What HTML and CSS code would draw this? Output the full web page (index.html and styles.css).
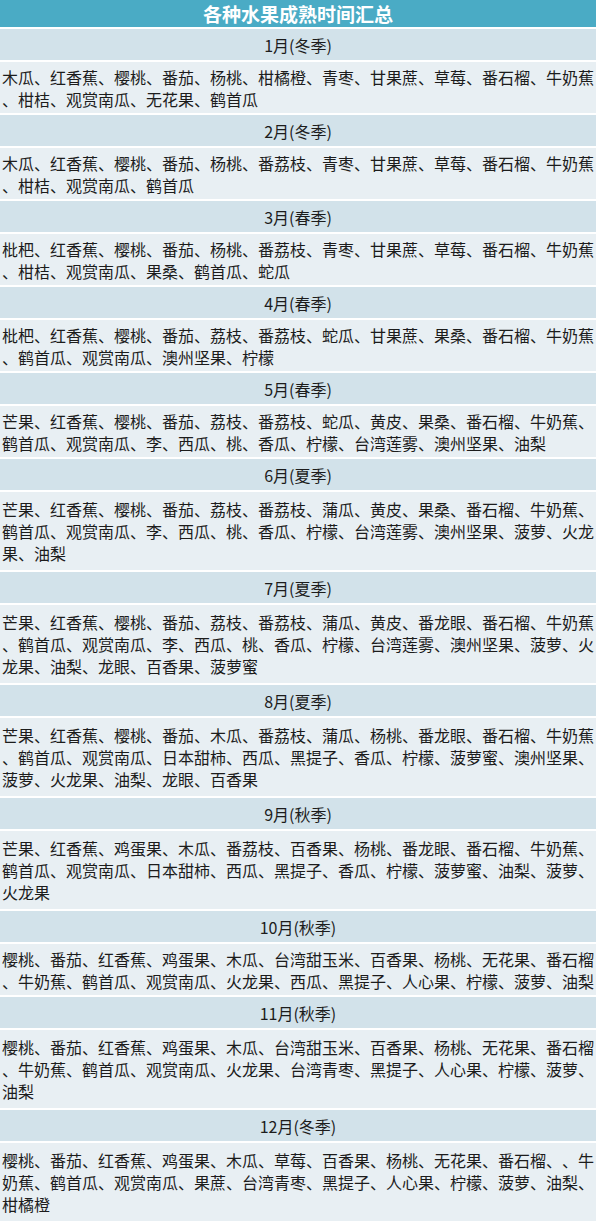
FILE: index.html
```html
<!DOCTYPE html>
<html lang="zh-CN">
<head>
<meta charset="utf-8">
<title>各种水果成熟时间汇总</title>
<link rel="stylesheet" href="styles.css">
</head>
<body>
<div class="sheet">
  <div class="title">各种水果成熟时间汇总</div>

  <div class="month">1月(冬季)</div>
  <div class="fruits l2"><p>木瓜、红香蕉、樱桃、番茄、杨桃、柑橘橙、青枣、甘果蔗、草莓、番石榴、牛奶蕉、柑桔、观赏南瓜、无花果、鹤首瓜</p></div>

  <div class="month">2月(冬季)</div>
  <div class="fruits l2"><p>木瓜、红香蕉、樱桃、番茄、杨桃、番荔枝、青枣、甘果蔗、草莓、番石榴、牛奶蕉、柑桔、观赏南瓜、鹤首瓜</p></div>

  <div class="month">3月(春季)</div>
  <div class="fruits l2"><p>枇杷、红香蕉、樱桃、番茄、杨桃、番荔枝、青枣、甘果蔗、草莓、番石榴、牛奶蕉、柑桔、观赏南瓜、果桑、鹤首瓜、蛇瓜</p></div>

  <div class="month">4月(春季)</div>
  <div class="fruits l2"><p>枇杷、红香蕉、樱桃、番茄、荔枝、番荔枝、蛇瓜、甘果蔗、果桑、番石榴、牛奶蕉、鹤首瓜、观赏南瓜、澳州坚果、柠檬</p></div>

  <div class="month">5月(春季)</div>
  <div class="fruits l2"><p>芒果、红香蕉、樱桃、番茄、荔枝、番荔枝、蛇瓜、黄皮、果桑、番石榴、牛奶蕉、鹤首瓜、观赏南瓜、李、西瓜、桃、香瓜、柠檬、台湾莲雾、澳州坚果、油梨</p></div>

  <div class="month">6月(夏季)</div>
  <div class="fruits l3"><p>芒果、红香蕉、樱桃、番茄、荔枝、番荔枝、蒲瓜、黄皮、果桑、番石榴、牛奶蕉、鹤首瓜、观赏南瓜、李、西瓜、桃、香瓜、柠檬、台湾莲雾、澳州坚果、菠萝、火龙果、油梨</p></div>

  <div class="month">7月(夏季)</div>
  <div class="fruits l3"><p>芒果、红香蕉、樱桃、番茄、荔枝、番荔枝、蒲瓜、黄皮、番龙眼、番石榴、牛奶蕉、鹤首瓜、观赏南瓜、李、西瓜、桃、香瓜、柠檬、台湾莲雾、澳州坚果、菠萝、火龙果、油梨、龙眼、百香果、菠萝蜜</p></div>

  <div class="month">8月(夏季)</div>
  <div class="fruits l3"><p>芒果、红香蕉、樱桃、番茄、木瓜、番荔枝、蒲瓜、杨桃、番龙眼、番石榴、牛奶蕉、鹤首瓜、观赏南瓜、日本甜柿、西瓜、黑提子、香瓜、柠檬、菠萝蜜、澳州坚果、菠萝、火龙果、油梨、龙眼、百香果</p></div>

  <div class="month">9月(秋季)</div>
  <div class="fruits l3"><p>芒果、红香蕉、鸡蛋果、木瓜、番荔枝、百香果、杨桃、番龙眼、番石榴、牛奶蕉、鹤首瓜、观赏南瓜、日本甜柿、西瓜、黑提子、香瓜、柠檬、菠萝蜜、油梨、菠萝、火龙果</p></div>

  <div class="month">10月(秋季)</div>
  <div class="fruits l2"><p>樱桃、番茄、红香蕉、鸡蛋果、木瓜、台湾甜玉米、百香果、杨桃、无花果、番石榴、牛奶蕉、鹤首瓜、观赏南瓜、火龙果、西瓜、黑提子、人心果、柠檬、菠萝、油梨</p></div>

  <div class="month">11月(秋季)</div>
  <div class="fruits l3"><p>樱桃、番茄、红香蕉、鸡蛋果、木瓜、台湾甜玉米、百香果、杨桃、无花果、番石榴、牛奶蕉、鹤首瓜、观赏南瓜、火龙果、台湾青枣、黑提子、人心果、柠檬、菠萝、油梨</p></div>

  <div class="month">12月(冬季)</div>
  <div class="fruits l3"><p>樱桃、番茄、红香蕉、鸡蛋果、木瓜、草莓、百香果、杨桃、无花果、番石榴、、牛奶蕉、鹤首瓜、观赏南瓜、果蔗、台湾青枣、黑提子、人心果、柠檬、菠萝、油梨、柑橘橙</p></div>
</div>
</body>
</html>
```

FILE: styles.css
```css
html, body {
  margin: 0;
  padding: 0;
  background: #ffffff;
}

body {
  font-family: "Noto Sans CJK SC", "Noto Sans", sans-serif;
  color: #1c1c1c;
}

.sheet {
  width: 596px;
  display: flex;
  flex-direction: column;
  gap: 2px;
}

.title {
  height: 27px;
  background: #4aabc5;
  color: #ffffff;
  font-size: 19px;
  font-weight: bold;
  display: flex;
  align-items: center;
  justify-content: center;
}

.month {
  height: 31px;
  background: #d2e2ea;
  font-size: 16px;
  display: flex;
  align-items: center;
  justify-content: center;
}

.fruits {
  background: #e8eff3;
  display: flex;
  align-items: center;
  padding-left: 2px;
}

.fruits p {
  margin: 0;
  font-size: 16px;
  line-height: 22px;
  line-break: anywhere;
  text-spacing-trim: space-all;
}

.l2 {
  height: 51px;
}

.l3 {
  height: 78px;
}
```
